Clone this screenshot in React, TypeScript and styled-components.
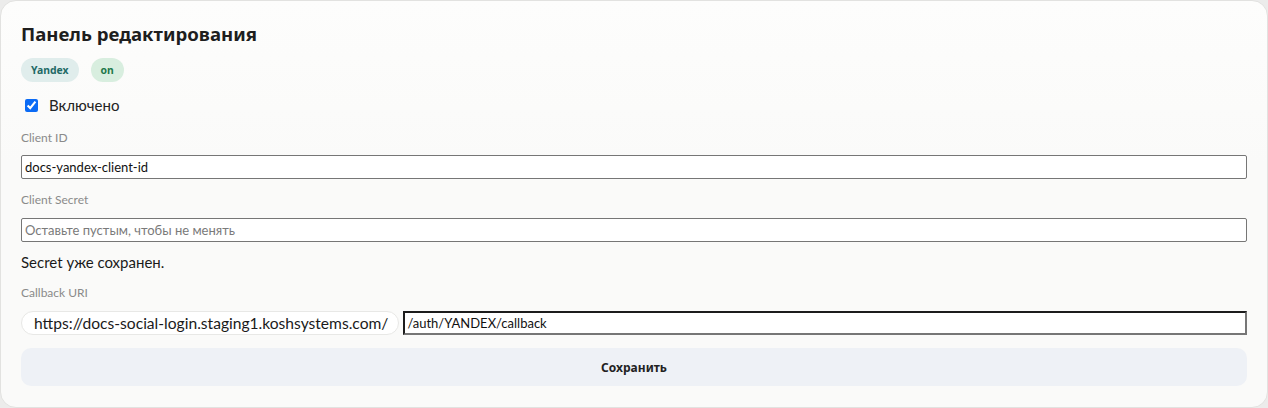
import React from "react";
import styled, { createGlobalStyle } from "styled-components";

const Global = createGlobalStyle`
  html, body { margin: 0; padding: 0; background: #ececeb; }
  body { font-family: Lato, "Noto Sans", sans-serif; }
  * { box-sizing: border-box; }
`;

const Card = styled.section`
  height: 408px;
  border: 1px solid #e2e2e0;
  border-radius: 16px;
  background: linear-gradient(180deg, #fdfdfc 0%, #fafaf9 40%, #fafaf9 100%);
  padding: 19px 20px 20px 20px;
  display: flex;
  flex-direction: column;
`;

const Title = styled.h1`
  margin: 0;
  font-family: "Noto Sans", sans-serif;
  font-weight: 700;
  font-size: 18.6px;
  line-height: 28px;
  color: #1e1e1e;
`;

const BadgeRow = styled.div`
  display: flex;
  gap: 12px;
  margin-top: 10px;
`;

const Badge = styled.span<{ $tone: "teal" | "green" }>`
  display: inline-flex;
  align-items: center;
  height: 24px;
  padding: 0 10px;
  border-radius: 12px;
  font-family: "Noto Sans", sans-serif;
  font-weight: 700;
  font-size: 10.4px;
  background: ${(p) => (p.$tone === "teal" ? "#e0edec" : "#d8eedf")};
  color: ${(p) => (p.$tone === "teal" ? "#1f6a66" : "#23784a")};
`;

const CheckRow = styled.label`
  display: flex;
  align-items: center;
  gap: 8px;
  margin-top: 14px;
  height: 18px;
  font-size: 15px;
  color: #222;
  input { margin: 0 3px 0 4px; width: 13px; height: 13px; accent-color: #0b6bf5; }
`;

const Label = styled.div<{ $mt: number }>`
  margin-top: ${(p) => p.$mt}px;
  font-size: 12px;
  line-height: 16px;
  color: #8a8a8a;
`;

const TextInput = styled.input<{ $mt?: number }>`
  margin-top: ${(p) => p.$mt ?? 0}px;
  height: 24px;
  width: 100%;
  border: 1px solid #767676;
  border-radius: 2px;
  background: #fff;
  padding: 0 3px;
  font-family: Lato, sans-serif;
  font-size: 13px;
  color: #111;
  outline: none;
  &::placeholder { color: #7a7a7a; }
`;

const Note = styled.div`
  margin-top: 10px;
  font-size: 15px;
  line-height: 20px;
  color: #1a1a1a;
`;

const UriRow = styled.div`
  margin-top: 10px;
  display: flex;
  gap: 4px;
  height: 24px;
`;

const Prefix = styled.span`
  display: inline-flex;
  align-items: center;
  padding: 0 10px 0 12px;
  border: 1px solid #e8e8e6;
  border-radius: 12px;
  background: #fff;
  font-size: 15.6px;
  color: #1a1a1a;
  white-space: nowrap;
`;

const PathInput = styled.input`
  flex: 1;
  height: 24px;
  border-style: solid;
  border-width: 2px;
  border-color: #1c1c1c #767676 #767676 #1c1c1c;
  background: #fff;
  padding: 0 2px;
  font-family: Lato, sans-serif;
  font-size: 13px;
  color: #111;
  outline: none;
`;

const SaveButton = styled.button`
  margin-top: 13px;
  height: 38px;
  width: 100%;
  border: none;
  border-radius: 10px;
  background: #eef1f6;
  font-family: "Noto Sans", sans-serif;
  font-weight: 700;
  font-size: 12px;
  color: #222;
  cursor: pointer;
`;

export default function App() {
  return (
    <>
      <Global />
      <Card>
        <Title>Панель редактирования</Title>
        <BadgeRow>
          <Badge $tone="teal">Yandex</Badge>
          <Badge $tone="green">on</Badge>
        </BadgeRow>
        <CheckRow>
          <input type="checkbox" defaultChecked />
          Включено
        </CheckRow>
        <Label $mt={16}>Client ID</Label>
        <TextInput $mt={9} defaultValue="docs-yandex-client-id" />
        <Label $mt={13}>Client Secret</Label>
        <TextInput $mt={10} placeholder="Оставьте пустым, чтобы не менять" />
        <Note>Secret уже сохранен.</Note>
        <Label $mt={13}>Callback URI</Label>
        <UriRow>
          <Prefix>https://docs-social-login.staging1.koshsystems.com/</Prefix>
          <PathInput defaultValue="/auth/YANDEX/callback" />
        </UriRow>
        <SaveButton>Сохранить</SaveButton>
      </Card>
    </>
  );
}
